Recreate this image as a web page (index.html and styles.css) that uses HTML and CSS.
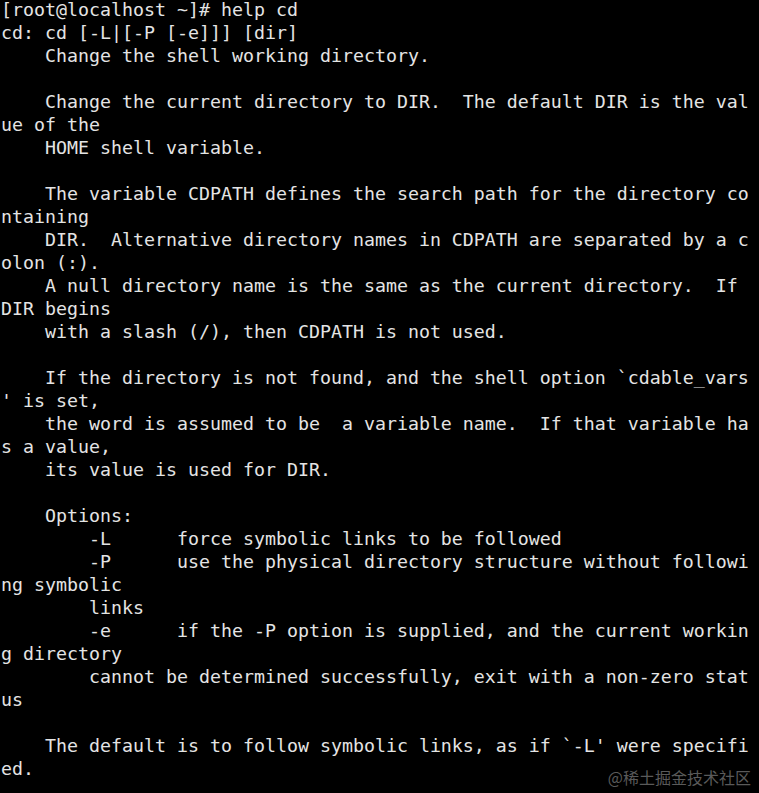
FILE: index.html
```html
<!DOCTYPE html>
<html>
<head>
<meta charset="utf-8">
<link rel="stylesheet" href="styles.css">
</head>
<body>
<div class="term">
<pre class="out">[root@localhost ~]# help cd
cd: cd [-L|[-P [-e]]] [dir]
    Change the shell working directory.

    Change the current directory to DIR.  The default DIR is the val
ue of the
    HOME shell variable.

    The variable CDPATH defines the search path for the directory co
ntaining
    DIR.  Alternative directory names in CDPATH are separated by a c
olon (:).
    A null directory name is the same as the current directory.  If
DIR begins
    with a slash (/), then CDPATH is not used.

    If the directory is not found, and the shell option `cdable_vars
' is set,
    the word is assumed to be  a variable name.  If that variable ha
s a value,
    its value is used for DIR.

    Options:
        -L      force symbolic links to be followed
        -P      use the physical directory structure without followi
ng symbolic
        links
        -e      if the -P option is supplied, and the current workin
g directory
        cannot be determined successfully, exit with a non-zero stat
us

    The default is to follow symbolic links, as if `-L' were specifi
ed.</pre>
<div class="mark">@稀土掘金技术社区</div>
</div>
</body>
</html>
```
FILE: styles.css
```css
html, body {
  margin: 0;
  padding: 0;
  background: #000;
}
.term {
  position: relative;
  width: 759px;
  height: 793px;
  overflow: hidden;
  background: #000;
}
.out {
  margin: -2px 0 0 1px;
  font-family: "DejaVu Sans Mono", monospace;
  font-size: 18.27px;
  line-height: 23px;
  color: #e4e4e4;
  white-space: pre;
}
.mark {
  position: absolute;
  right: 8px;
  bottom: 7px;
  font-family: "Noto Sans CJK SC", sans-serif;
  font-size: 16px;
  line-height: 18px;
  color: #5a5a5a;
}
```
